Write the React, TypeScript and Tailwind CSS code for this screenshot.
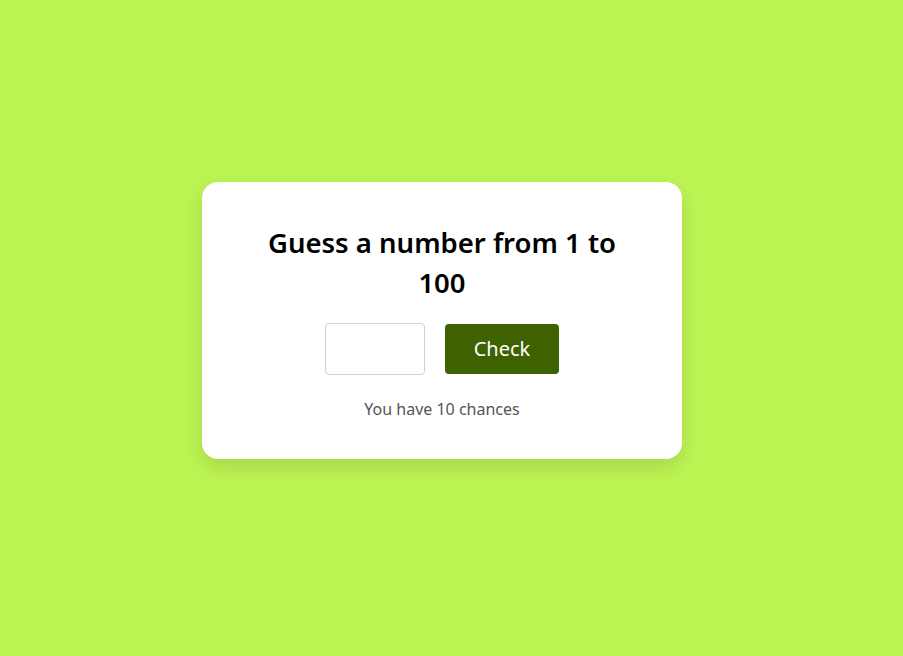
export default function App() {
  return (
    <div
      className="min-h-screen w-full flex items-center justify-center bg-[#bcf453] pr-[19px] pb-[15px]"
      style={{ fontFamily: '"Noto Sans", "Open Sans", sans-serif' }}
    >
      <div className="w-[480px] rounded-2xl bg-white px-10 pt-[41px] pb-[38px] shadow-[0_8px_20px_rgba(0,0,0,0.12)] flex flex-col items-center">
        <h1 className="text-[27.5px] leading-[40px] font-semibold text-black text-center">
          Guess a number from 1 to 100
        </h1>
        <div className="mt-5 flex items-center gap-5">
          <input
            type="number"
            className="w-[100px] h-[52px] rounded border border-[#d0d0d0] bg-white outline-none px-2 text-lg"
          />
          <button className="w-[114px] h-[50px] rounded bg-[#3f6200] text-white text-[20px]">
            Check
          </button>
        </div>
        <p className="mt-[22px] text-[16px] leading-6 text-[#555]">You have 10 chances</p>
      </div>
    </div>
  );
}
